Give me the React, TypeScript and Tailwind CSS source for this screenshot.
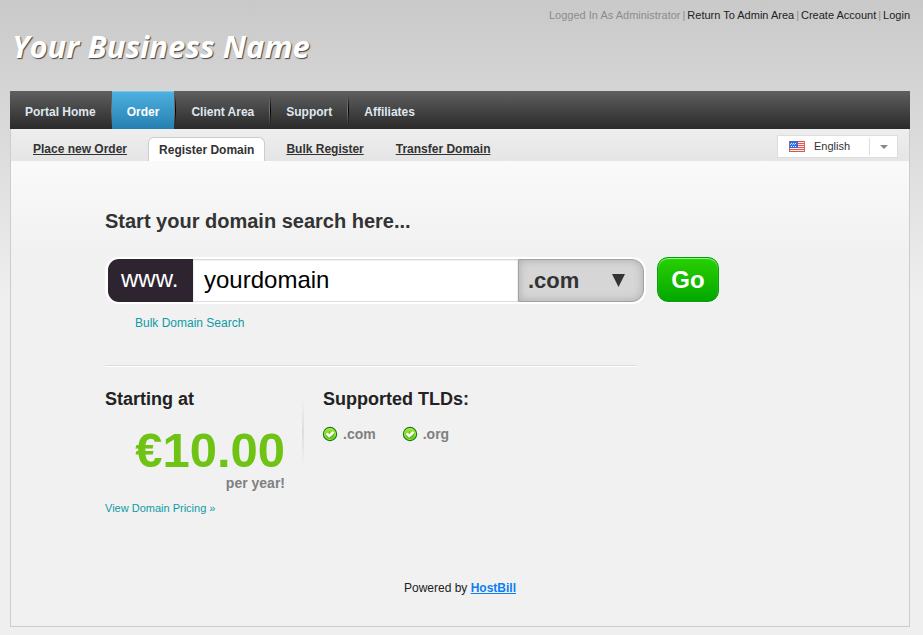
import React from "react";

const navItems = ["Portal Home", "Order", "Client Area", "Support", "Affiliates"];
const subItems = ["Place new Order", "Register Domain", "Bulk Register", "Transfer Domain"];

function UsFlag() {
  return (
    <svg width="16" height="11" viewBox="0 0 16 11" aria-hidden="true" shapeRendering="crispEdges">
      <rect width="16" height="11" fill="#fbeeee" />
      {[0, 2, 4, 6, 8, 10].map((y) => (
        <rect key={y} y={y} width="16" height="1" fill={y === 0 || y === 10 ? "#c0604a" : "#fb4a4a"} />
      ))}
      <rect width="9" height="7" fill="#2f6fe8" />
      <rect width="9" height="1" fill="#5a5fb0" />
      {[2, 4, 6].map((x) => (
        <React.Fragment key={x}>
          <rect x={x} y="2" width="1" height="1" fill="#e8efff" />
          <rect x={x - 1} y="3" width="1" height="1" fill="#b9cdfb" />
          <rect x={x} y="5" width="1" height="1" fill="#e8efff" />
        </React.Fragment>
      ))}
      <rect x="0" y="0" width="1" height="11" fill="#8a6a9a" />
      <rect x="15" y="0" width="1" height="11" fill="#cf6a58" />
    </svg>
  );
}

function CheckBadge() {
  return (
    <svg width="16" height="16" viewBox="0 0 16 16" aria-hidden="true">
      <defs>
        <linearGradient id="badge" x1="0" y1="0" x2="0" y2="1">
          <stop offset="0" stopColor="#a6ea3c" />
          <stop offset="1" stopColor="#45b80c" />
        </linearGradient>
      </defs>
      <circle cx="8" cy="8" r="6.6" fill="url(#badge)" stroke="#1c7a10" strokeWidth="1.2" />
      <circle cx="8" cy="8" r="5.5" fill="none" stroke="#b9f06a" strokeWidth="0.7" />
      <path d="M4.600 7.400 7.200 10 11.500 5.800" fill="none" stroke="#fff" strokeWidth="2.400" />
    </svg>
  );
}

function Header() {
  return (
    <header className="h-[91px]">
      <div className="flex justify-end gap-[2px] pt-[7px] text-[11px] leading-4 text-[#8c8c8c]">
        <span>Logged In As Administrator</span>
        <span>|</span>
        <a href="#admin" className="text-[#222]">Return To Admin Area</a>
        <span>|</span>
        <a href="#create" className="text-[#222]">Create Account</a>
        <span>|</span>
        <a href="#login" className="text-[#222]">Login</a>
      </div>
      <div className="pl-[2px] font-['Open_Sans',sans-serif] text-[31px] leading-[46px] font-bold text-white italic [text-shadow:1px_1px_1px_#444]">
        Your Business Name
      </div>
    </header>
  );
}

function MainNav() {
  return (
    <nav className="flex h-[38px] bg-linear-to-b from-[#606060] to-[#2a2a2a] text-[12px] font-bold text-[#dfe7f0]">
      {navItems.map((item, i) => (
        <React.Fragment key={item}>
          <a
            href="#nav"
            className={
              item === "Order"
                ? "flex items-center border-t border-[#7cc4e8] bg-linear-to-b from-[#4db0e0] to-[#2580b0] px-[15px] pt-[2px] text-white"
                : "flex items-center px-[15px] pt-[3px]"
            }
          >
            {item}
          </a>
          {i < navItems.length - 1 && (
            <span className="my-1 flex">
              <span className="w-px bg-linear-to-b from-transparent via-[#777] to-transparent" />
              {i > 0 && <span className="w-px bg-linear-to-b from-transparent via-black to-transparent" />}
            </span>
          )}
        </React.Fragment>
      ))}
    </nav>
  );
}

function SubNav() {
  return (
    <div className="flex h-8 items-end justify-between bg-linear-to-b from-[#eee] to-[#e5e5e5] pr-[11px] pl-[11px]">
      <div className="flex items-end gap-[10px] text-[12px] leading-[24px] font-bold text-[#333]">
        {subItems.map((item) =>
          item === "Register Domain" ? (
            <a key={item} href="#register" className="h-6 rounded-t-md border border-b-0 border-[#ccc] bg-white px-[10px]">
              {item}
            </a>
          ) : (
            <a key={item} href="#sub" className="px-[11px] underline">
              {item}
            </a>
          ),
        )}
      </div>
      <div className="mb-[3px] flex h-[23px] items-center border border-[#ddd] bg-white pl-[11px]">
        <UsFlag />
        <select aria-label="Language" className="w-16 appearance-none pl-[9px] text-[11px] text-[#333]">
          <option>English</option>
        </select>
        <span className="flex h-[17px] w-7 items-center justify-center border-l border-[#ddd]">
          <svg width="8" height="4" viewBox="0 0 8 4" aria-hidden="true">
            <path d="M0 0h8L4 4z" fill="#888" />
          </svg>
        </span>
      </div>
    </div>
  );
}

function DomainSearch() {
  return (
    <form className="mt-[21px] flex gap-[11px]">
      <div className="flex h-[47px] w-[541px] rounded-[14px] bg-white p-[2px] pl-[3px]">
        <label htmlFor="domain" className="w-[85px] rounded-l-[11px] bg-[#2e2430] pl-[13px] text-[24px] leading-[40px] text-white">
          www.
        </label>
        <input
          id="domain"
          defaultValue="yourdomain"
          className="min-w-0 flex-1 bg-white pb-[2px] pl-[11px] text-[24px] text-black shadow-[inset_0_1px_2px_#ccc,inset_0_-1px_1px_#ddd] outline-none"
        />
        <div className="relative flex w-[126px]">
          <select
            aria-label="Extension"
            className="h-full w-full appearance-none rounded-r-[12px] border border-[#a2a2a2] bg-[#d6d6d6] pl-[9px] text-[22px] font-bold text-[#333] shadow-[inset_0_0_8px_#aaa]"
          >
            <option>.com</option>
          </select>
          <svg className="pointer-events-none absolute top-[15px] right-[19px]" width="13" height="13" viewBox="0 0 13 13" aria-hidden="true">
            <path d="M0 0h13L6.500 13z" fill="#333" />
          </svg>
        </div>
      </div>
      <button
        type="submit"
        className="h-[45px] w-[62px] rounded-[11px] border border-[#0b9c0b] bg-linear-to-b from-[#27d000] to-[#00a800] text-[24px] font-bold text-white shadow-[inset_0_1px_1px_#8f8,0_1px_0_#fff]"
      >
        Go
      </button>
    </form>
  );
}

function Pricing() {
  return (
    <div className="flex pt-[21px]">
      <section className="w-[197px]">
        <h2 className="text-[18px] leading-6 font-bold text-[#222]">Starting at</h2>
        <div className="mr-[17px] text-right font-bold">
          <p className="pt-[14px] text-[49px] leading-[50px] text-[#6fc314]">€10.00</p>
          <p className="text-[14px] leading-4 text-[#808080]">per year!</p>
        </div>
        <a href="#pricing" className="mt-[7px] block text-[11px] leading-5 text-[#0d9ba5]">
          View Domain Pricing »
        </a>
      </section>
      <span className="mt-3 h-[66px] w-[2px] bg-linear-to-b from-transparent via-[#ddd] to-transparent" />
      <section className="pl-[19px]">
        <h2 className="text-[18px] leading-6 font-bold text-[#222]">Supported TLDs:</h2>
        <ul className="flex gap-[27px] pt-[13px] text-[14px] leading-5 font-bold text-[#808080]">
          {[".com", ".org"].map((tld) => (
            <li key={tld} className="-ml-px flex items-center gap-[5px]">
              <CheckBadge />
              {tld}
            </li>
          ))}
        </ul>
      </section>
    </div>
  );
}

export default function App() {
  return (
    <div className="min-h-screen bg-[#efefef] bg-[linear-gradient(#c9c9c9,#efefef_300px)] pr-[13px] pb-2 pl-[10px] font-['Liberation_Sans',Arial,sans-serif]">
      <Header />
      <MainNav />
      <main className="border border-t-0 border-[#ccc]">
        <SubNav />
        <div className="bg-[linear-gradient(#fafafa,#f1f1f1_90px)] pb-[28px] pl-[94px]">
          <h1 className="pt-[45px] text-[20px] leading-[30px] font-bold text-[#333]">Start your domain search here...</h1>
          <DomainSearch />
          <a href="#bulk" className="mt-[9px] ml-[30px] block text-[12px] leading-5 text-[#0d9ba5]">
            Bulk Domain Search
          </a>
          <hr className="mt-[32px] w-[532px] border-t border-[#ddd] shadow-[0_1px_0_#fff]" />
          <Pricing />
          <footer className="-ml-[94px] pt-[60px] text-center text-[12px] leading-5 text-[#222]">
            Powered by{" "}
            <a href="#hostbill" className="font-bold text-[#0c7ff2] underline">
              HostBill
            </a>
          </footer>
        </div>
      </main>
    </div>
  );
}
